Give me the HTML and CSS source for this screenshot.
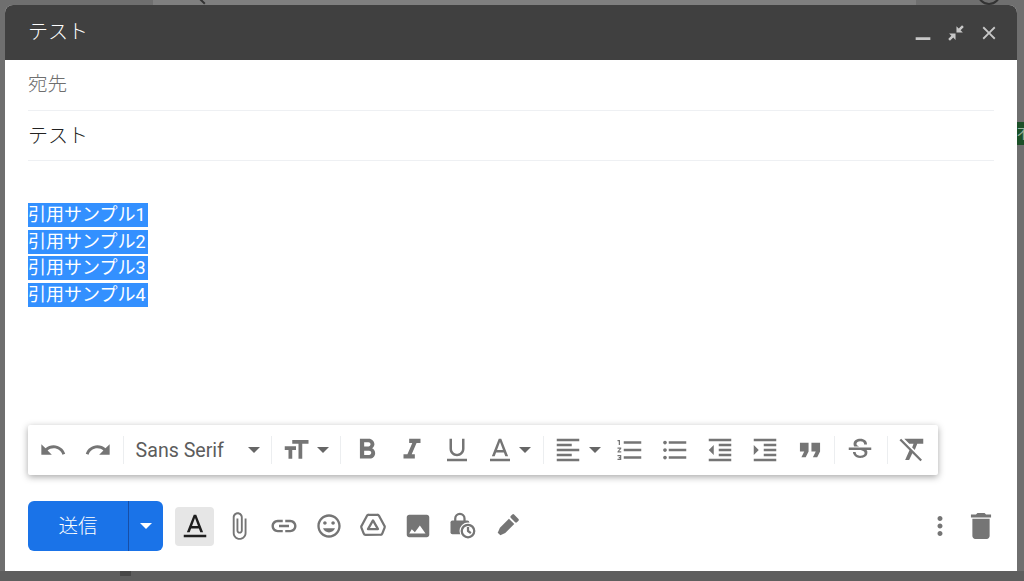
FILE: index.html
```html
<!DOCTYPE html>
<html lang="ja">
<head>
<meta charset="utf-8">
<title>テスト</title>
<link rel="stylesheet" href="styles.css">
</head>
<body>
<div class="backdrop" aria-hidden="true">
  <span class="bd-searchbox"></span>
  <span class="bd-mail">Mail</span>
  <span class="bd-handle"></span>
  <span class="bd-search">メールを検索</span>
  <span class="bd-help"></span>
  <span class="bd-tag">不</span>
  <span class="bd-bottom"></span>
  <span class="bd-tick"></span>
</div>
<main class="compose">
  <header class="titlebar">
    <span class="title">テスト</span>
    <div class="win-controls">
      <svg class="wc" viewBox="0 0 24 24"><path d="M4 16.500h16v3H4z"/></svg>
      <svg class="wc" viewBox="0 0 24 24"><path d="M18.600 3.500 20.500 5.400 17 9l2.500 2.500h-7v-7L15 7zM5.400 20.500 3.500 18.600 7 15l-2.500-2.500h7v7L9 17z"/></svg>
      <svg class="wc" viewBox="0 0 24 24"><path d="M19 6.410 17.590 5 12 10.590 6.410 5 5 6.410 10.590 12 5 17.590 6.410 19 12 13.410 17.590 19 19 17.590 13.410 12z"/></svg>
    </div>
  </header>
  <div class="field field-to">宛先</div>
  <div class="field field-subject">テスト</div>
  <div class="editor">
    <div class="line"><span class="sel">引用サンプル1</span></div>
    <div class="line"><span class="sel">引用サンプル2</span></div>
    <div class="line"><span class="sel">引用サンプル3</span></div>
    <div class="line"><span class="sel">引用サンプル4</span></div>
  </div>
  <div class="format-bar">
    <button class="tb"><svg class="ic ic-sm" viewBox="0 0 24 24"><path d="M12.500 8c-2.650 0-5.050.99-6.900 2.600L2 7v9h9l-3.620-3.620c1.390-1.160 3.160-1.880 5.120-1.880 3.540 0 6.550 2.310 7.600 5.500l2.370-.78C21.080 11.030 17.150 8 12.500 8z"/></svg></button>
    <button class="tb"><svg class="ic ic-sm" viewBox="0 0 24 24"><path d="M18.400 10.600C16.550 8.990 14.150 8 11.500 8c-4.650 0-8.580 3.030-9.960 7.220L3.900 16c1.050-3.190 4.050-5.500 7.600-5.500 1.950 0 3.730.72 5.120 1.880L13 16h9V7l-3.600 3.600z"/></svg></button>
    <span class="sep"></span>
    <button class="font-pick"><span class="font-name">Sans Serif</span><span class="caret"></span></button>
    <span class="sep"></span>
    <button class="tb tb-size"><svg class="ic" viewBox="0 0 24 24"><path d="M9 4v3h5v12h3V7h5V4H9zm-6 8h3v7h3v-7h3V9H3v3z"/></svg><span class="caret"></span></button>
    <span class="sep sep-wide"></span>
    <button class="tb"><svg class="ic ic-lg" viewBox="0 0 24 24"><path d="M15.600 10.790c.97-.67 1.650-1.770 1.650-2.790 0-2.260-1.750-4-4-4H7v14h7.040c2.090 0 3.710-1.700 3.710-3.790 0-1.520-.86-2.820-2.150-3.420zM10 6.500h3c.83 0 1.500.67 1.500 1.500s-.67 1.500-1.500 1.500h-3v-3zm3.500 9H10v-3h3.500c.83 0 1.500.67 1.500 1.500s-.67 1.500-1.500 1.500z"/></svg></button>
    <button class="tb"><svg class="ic ic-lg" viewBox="0 0 24 24"><path d="M10 4v3h2.210l-3.420 8H6v3h8v-3h-2.210l3.420-8H18V4z"/></svg></button>
    <button class="tb"><svg class="ic" viewBox="0 0 24 24"><path d="M12 17c3.310 0 6-2.690 6-6V3h-2v8c0 2.200-1.800 4-4 4s-4-1.800-4-4V3H6v8c0 3.310 2.690 6 6 6zm-8 2v2h16v-2H4z"/></svg></button>
    <button class="tb tb-color"><svg class="ic" viewBox="0 0 24 24"><path d="M11 3 5.500 17h2.250l1.120-3h6.250l1.120 3h2.250L13 3h-2zm-1.380 9L12 5.670 14.380 12H9.620zM4 19h16v2H4z"/></svg><span class="caret"></span></button>
    <span class="sep"></span>
    <button class="tb tb-align"><svg class="ic" viewBox="0 0 24 24"><path d="M15 15H3v2h12v-2zm0-8H3v2h12V7zM3 13h18v-2H3v2zm0 8h18v-2H3v2zM3 3v2h18V3H3z"/></svg><span class="caret"></span></button>
    <button class="tb"><svg class="ic" viewBox="0 0 24 24"><path d="M2 17h2v.5H3v1h1v.5H2v1h3v-4H2v1zm1-9h1V4H2v1h1v3zm-1 3h1.800L2 13.100v.9h3v-1H3.200L5 10.900V10H2v1zm5-6v2h14V5H7zm0 14h14v-2H7v2zm0-6h14v-2H7v2z"/></svg></button>
    <button class="tb"><svg class="ic" viewBox="0 0 24 24"><path d="M4 10.500c-.83 0-1.500.67-1.500 1.500s.67 1.500 1.500 1.500 1.500-.67 1.500-1.500-.67-1.500-1.500-1.500zm0-6c-.83 0-1.500.67-1.500 1.500S3.170 7.500 4 7.500 5.500 6.830 5.500 6 4.830 4.500 4 4.500zm0 12c-.83 0-1.500.68-1.500 1.500s.68 1.500 1.500 1.500 1.500-.68 1.500-1.500-.67-1.500-1.500-1.500zM7 19h14v-2H7v2zm0-6h14v-2H7v2zm0-8v2h14V5H7z"/></svg></button>
    <button class="tb"><svg class="ic" viewBox="0 0 24 24"><path d="M11 17h10v-2H11v2zm-8-5 4 4V8l-4 4zm0 9h18v-2H3v2zM3 3v2h18V3H3zm8 6h10V7H11v2zm0 4h10v-2H11v2z"/></svg></button>
    <button class="tb"><svg class="ic" viewBox="0 0 24 24"><path d="M3 21h18v-2H3v2zM3 8v8l4-4-4-4zm8 9h10v-2H11v2zM3 3v2h18V3H3zm8 6h10V7H11v2zm0 4h10v-2H11v2z"/></svg></button>
    <button class="tb"><svg class="ic" viewBox="0 0 24 24"><path d="M6 17h3l2-4V7H5v6h3zm8 0h3l2-4V7h-6v6h3z" transform="translate(12 12) scale(1.150) translate(-12 -12)"/></svg></button>
    <span class="sep sep-mid"></span>
    <button class="tb"><svg class="ic" viewBox="0 0 24 24"><path d="M6.850 7.080C6.850 4.370 9.450 3 12.240 3c1.640 0 3 .49 3.900 1.280.77.65 1.460 1.730 1.460 3.240h-2.300c0-.31-.05-.59-.15-.85-.29-.86-1.200-1.600-2.900-1.600-1.860 0-3.100 1.020-3.100 2.200 0 .48.25.88.74 1.210.38.25.77.48 1.410.7H7.390c-.21-.34-.54-.89-.54-1.920zM21 12v-2H3v2h9.620c1.150.45 3.100.75 3.100 2.300 0 1.400-1.500 2.200-3.400 2.200-1.540 0-3.800-.8-3.800-3H6.400c0 .55.08 1.130.24 1.580.81 2.290 3.220 3.300 5.670 3.300 2.350 0 5.590-.92 5.590-4.340 0-.72-.13-1.710-.78-2.040H21z"/></svg></button>
    <span class="sep sep-end"></span>
    <button class="tb"><svg class="ic" viewBox="0 0 24 24"><path d="M3.270 3 2 4.270l7.970 7.970L6.500 20h3.200l2.570-5.460L18.730 21 20 19.730 3.550 3.270 3.270 3zM6 3v.18L9.820 7h3.400l-1.100 2.900 2.100 2.100L16.210 7H21V3H6z"/></svg></button>
  </div>
  <footer class="actions">
    <div class="send">
      <span class="send-label">送信</span>
      <span class="send-more"><span class="caret caret-light"></span></span>
    </div>
    <span class="format-toggle"><svg class="ic-toggle" viewBox="0 0 24 24"><path d="M11 3 5.500 17h2.250l1.120-3h6.250l1.120 3h2.250L13 3h-2zm-1.380 9L12 5.670 14.380 12H9.620zM3 19h18v2H3z"/></svg></span>
    <span class="act"><svg class="ic" viewBox="0 0 24 24"><path d="M16.500 6v11.500c0 2.210-1.790 4-4 4s-4-1.790-4-4V5c0-1.380 1.120-2.500 2.500-2.500s2.500 1.120 2.500 2.500v10.500c0 .55-.45 1-1 1s-1-.45-1-1V6H10v9.500c0 1.380 1.120 2.500 2.500 2.500s2.500-1.120 2.500-2.500V5c0-2.210-1.790-4-4-4S7 2.790 7 5v12.500c0 3.040 2.460 5.500 5.500 5.500s5.500-2.460 5.500-5.500V6h-1.500z"/></svg></span>
    <span class="act"><svg class="ic" viewBox="0 0 24 24"><path d="M3.900 12c0-1.710 1.390-3.100 3.100-3.100h4V7H7c-2.760 0-5 2.240-5 5s2.240 5 5 5h4v-1.900H7c-1.710 0-3.100-1.390-3.100-3.100zM8 13h8v-2H8v2zm9-6h-4v1.900h4c1.710 0 3.100 1.390 3.100 3.100s-1.390 3.100-3.100 3.100h-4V17h4c2.760 0 5-2.240 5-5s-2.240-5-5-5z"/></svg></span>
    <span class="act"><svg class="ic ic-xl" viewBox="0 0 24 24"><path d="M11.990 2C6.470 2 2 6.480 2 12s4.470 10 9.990 10C17.520 22 22 17.520 22 12S17.520 2 11.990 2zM12 20c-4.420 0-8-3.580-8-8s3.580-8 8-8 8 3.580 8 8-3.580 8-8 8zm3.500-9c.83 0 1.500-.67 1.500-1.500S16.330 8 15.500 8 14 8.670 14 9.500s.67 1.500 1.500 1.500zm-7 0c.83 0 1.500-.67 1.500-1.500S9.330 8 8.500 8 7 8.670 7 9.500 7.670 11 8.500 11zm3.500 6.500c2.330 0 4.310-1.460 5.110-3.500H6.890c.8 2.040 2.780 3.500 5.110 3.500z"/></svg></span>
    <span class="act"><svg class="ic" viewBox="0 0 24 24"><path class="stroke" d="M8.500 3h7a1.500 1.500 0 0 1 1.300.75l4.400 8.200a1.500 1.500 0 0 1 .1 1.300l-1.900 4.800a1.500 1.500 0 0 1-1.400.95H6a1.500 1.500 0 0 1-1.400-.95l-1.900-4.800a1.500 1.500 0 0 1 .1-1.300l4.400-8.200A1.500 1.500 0 0 1 8.500 3z"/><path class="stroke" d="M12 7.500 16 14.500H8z"/></svg></span>
    <span class="act"><svg class="ic" viewBox="0 0 24 24"><path d="M21 19V5c0-1.100-.9-2-2-2H5c-1.100 0-2 .9-2 2v14c0 1.100.9 2 2 2h14c1.100 0 2-.9 2-2zM7 14.500l2.500 2.500 4-5.500 4.500 6.500H5z"/></svg></span>
    <span class="act"><svg class="ic" viewBox="0 0 24 24"><path class="stroke" d="M5.800 8.500V6a3.700 3.700 0 0 1 7.400 0v2.500"/><rect x="2" y="7.500" width="15" height="11" rx="1.500"/><circle class="cut" cx="16" cy="16" r="6.800"/><circle class="stroke" cx="16" cy="16" r="5"/><path class="stroke" d="M16 12.800V16l2.300 1.700"/></svg></span>
    <span class="act"><svg class="ic" viewBox="0 0 24 24"><g transform="rotate(45 12 12)"><rect x="8.500" y="1.500" width="7" height="3.800" rx="1"/><path d="M9 6.800h6V17l-1.500 4h-3L9 17z"/></g></svg></span>
    <span class="act act-right"><svg class="ic" viewBox="0 0 24 24"><path d="M12 8c1.100 0 2-.9 2-2s-.9-2-2-2-2 .9-2 2 .9 2 2 2zm0 2c-1.100 0-2 .9-2 2s.9 2 2 2 2-.9 2-2-.9-2-2-2zm0 6c-1.100 0-2 .9-2 2s.9 2 2 2 2-.9 2-2-.9-2-2-2z"/></svg></span>
    <span class="act"><svg class="ic" viewBox="0 0 24 24"><path d="M6 19c0 1.100.9 2 2 2h8c1.100 0 2-.9 2-2V7H6v12zM19 4h-3.500l-1-1h-5l-1 1H5v2h14V4z" transform="translate(12 12) scale(1.150) translate(-12 -12)"/></svg></span>
  </footer>
</main>
</body>
</html>
```
FILE: styles.css
```css
* { box-sizing: border-box; }
html, body { height: 100%; }
body {
  margin: 0;
  width: 1024px;
  height: 581px;
  overflow: hidden;
  background: #6f6f6f;
  padding: 5px 7px 10px 5px;
  font-family: Roboto, "Noto Sans CJK JP", sans-serif;
  position: relative;
}
button { font: inherit; background: none; border: 0; padding: 0; margin: 0; color: inherit; }
.backdrop { position: absolute; inset: 0; overflow: hidden; }
.bd-mail { position: absolute; left: -12px; top: -25px; font-size: 24px; line-height: 30px; color: #333; }
.bd-searchbox { position: absolute; left: 153px; top: 0; width: 763px; height: 6px; background: #7f7f7f; }
.bd-handle { position: absolute; left: 198px; top: 0; width: 8px; height: 2px; background: #333; transform: rotate(45deg); }
.bd-search { position: absolute; left: 232px; top: -26px; font-size: 22px; line-height: 30px; color: #3c3c3c; }
.bd-help { position: absolute; left: 977px; top: -19px; width: 24px; height: 24px; border: 2px solid #333; border-radius: 50%; }
.bd-tag { position: absolute; left: 1017px; top: 122px; width: 7px; height: 23px; overflow: hidden; background: #1c5028; color: #9ab39f; font-size: 13px; line-height: 23px; }
.bd-bottom { position: absolute; left: 0; right: 0; top: 571px; height: 10px; background: #5e5e5e; }
.bd-tick { position: absolute; left: 120px; top: 571px; width: 11px; height: 5px; background: #474747; }

.compose {
  position: relative;
  height: 566px;
  background: #fff;
  display: flex;
  flex-direction: column;
  border-radius: 8px 8px 0 0;
  overflow: hidden;
}
.titlebar {
  height: 55px;
  flex: none;
  background: #404040;
  display: flex;
  align-items: center;
  justify-content: space-between;
  padding: 0 17px 0 23px;
  color: #fff;
  font-size: 20px;
  font-family: "Noto Sans CJK JP", sans-serif;
  font-weight: 300;
}
.title { color: #fff; padding-bottom: 4px; }
.win-controls { display: flex; gap: 11px; align-items: center; }
.wc { width: 22px; height: 22px; fill: #c8c8c8; display: block; }

.field {
  flex: none;
  height: 50px;
  margin: 0 23px;
  border-bottom: 1px solid #eef0f3;
  display: flex;
  align-items: center;
  font-family: "Noto Sans CJK JP", sans-serif;
  font-size: 20px;
  font-weight: 300;
  color: #222;
  padding-bottom: 6px;
}
.field-to { color: #6e6e6e; margin-top: 1px; font-size: 19.500px; }
.field-subject { padding-bottom: 3px; }

.editor {
  flex: 1;
  padding: 41px 23px 0;
  font-size: 18px;
  color: #fff;
}
.line { height: 26.700px; line-height: 26.700px; }
.sel { background: #3390ff; display: inline-block; height: 24px; line-height: 24px; padding-right: 2px; }

.format-bar {
  flex: none;
  margin: 0 79px 26px 23px;
  height: 50px;
  background: #fff;
  border-radius: 2px;
  box-shadow: 0 2px 7px rgba(0,0,0,.35);
  display: flex;
  align-items: center;
  padding-left: 3px;
}
.tb { flex: none; width: 44.800px; height: 50px; display: flex; align-items: center; justify-content: center; }
.ic { width: 30px; height: 30px; fill: #757575; display: block; flex: none; }
.ic-sm { width: 28px; height: 28px; }
.ic-lg { width: 34px; height: 34px; }
.ic-xl { width: 28px; height: 28px; }
.stroke { fill: none; stroke: #757575; stroke-width: 1.800; stroke-linejoin: round; }
.cut { fill: #fff; }
.sep { flex: none; width: 1px; height: 28px; background: #eceef0; margin: 0 2px; }
.sep-wide { margin-right: 4px; }
.sep-mid { margin-right: 3px; }
.sep-end { margin-left: 4px; }
.font-pick { flex: none; width: 143px; height: 50px; display: flex; align-items: center; padding-left: 10px; }
.font-name { font-size: 19.600px; color: #5c5c5c; width: 112px; text-align: left; white-space: nowrap; }
.caret { flex: none; width: 0; height: 0; border-left: 6px solid transparent; border-right: 6px solid transparent; border-top: 6px solid #666; }
.tb-size { width: 64px; justify-content: flex-start; padding-left: 7px; }
.tb-size .caret { margin-left: 6px; }
.tb-color { width: 62px; justify-content: flex-start; padding-left: 6px; gap: 4px; }
.tb-align { width: 62px; justify-content: flex-start; padding-left: 7px; gap: 6px; }

.actions {
  flex: none;
  height: 70px;
  padding: 0 14px 20px 23px;
  display: flex;
  align-items: center;
}
.send {
  flex: none;
  width: 135px;
  height: 50px;
  background: #1a73e8;
  border-radius: 6px;
  display: flex;
  color: #fff;
  font-size: 19.500px;
  font-family: "Noto Sans CJK JP", sans-serif;
  font-weight: 300;
}
.send-label { width: 100px; display: flex; align-items: center; justify-content: center; padding-bottom: 3px; }
.send-more { flex: 1; border-left: 1px solid #174ea6; display: flex; align-items: center; justify-content: center; }
.caret-light { border-top-color: #fff; }
.format-toggle {
  flex: none;
  width: 39px;
  height: 39px;
  margin: 0 3px 0 12px;
  background: #e6e6e6;
  border-radius: 4px;
  display: flex;
  align-items: center;
  justify-content: center;
}
.ic-toggle { width: 30px; height: 30px; fill: #1f1f1f; display: block; }
.act { flex: none; width: 44.700px; height: 50px; display: flex; align-items: center; justify-content: center; }
.act-right { margin-left: auto; width: 36.700px; }
```
